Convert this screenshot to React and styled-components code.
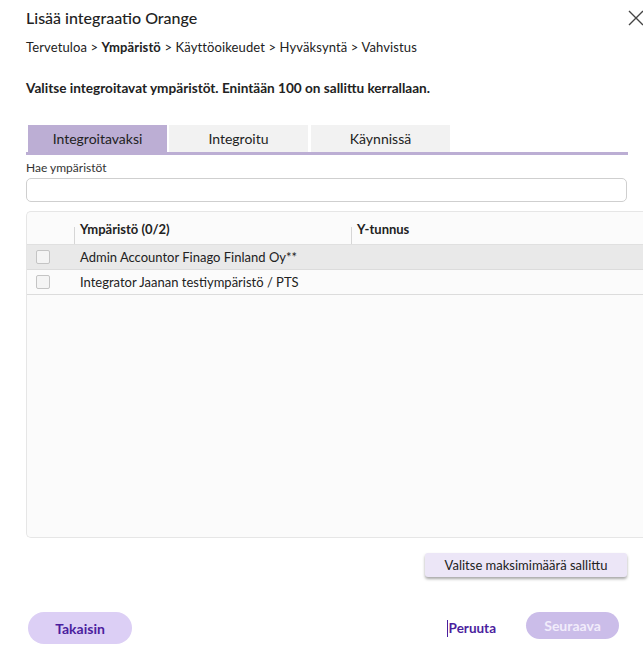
import React from 'react'
import styled, { createGlobalStyle } from 'styled-components'

const Global = createGlobalStyle`
    html, body {
        margin: 0;
        padding: 0;
        background: #fff;
        overflow: hidden;
    }
    body {
        font-family: Lato, "Noto Sans", sans-serif;
        color: #222;
    }
`

const Dialog = styled.div`
    width: 660px;
    height: 653px;
    padding: 0 0 0 26px;
    box-sizing: border-box;
    display: flex;
    flex-direction: column;
`

const Header = styled.div`
    display: flex;
    align-items: center;
    justify-content: space-between;
    height: 34px;
    width: 617px;
`

const Title = styled.h1`
    margin: 0;
    font-size: 16px;
    font-weight: 500;
    color: #222;
`

const Close = styled.button`
    border: none;
    background: none;
    padding: 0;
    width: 18px;
    height: 18px;
    margin-right: -2px;
    margin-top: 2px;
    cursor: pointer;
`

const Crumbs = styled.div`
    margin-top: 3px;
    font-size: 13px;
    letter-spacing: 0.12px;
    color: #222;
    height: 20px;
    line-height: 20px;
    b {
        font-weight: 700;
    }
`

const Intro = styled.p`
    margin: 21px 0 0;
    font-size: 13.6px;
    font-weight: 700;
    line-height: 20px;
`

const Tabs = styled.div`
    margin-top: 27px;
    width: 602px;
    display: flex;
    gap: 2px;
    border-bottom: 3px solid #bcaed4;
    padding-left: 2px;
    box-sizing: border-box;
`

const Tab = styled.div`
    width: 139px;
    height: 27px;
    display: flex;
    align-items: center;
    justify-content: center;
    font-size: 14px;
    color: #222;
    background: ${p => (p.$active ? '#bcaed4' : '#f2f2f2')};
    margin-left: ${p => p.$gap || 0}px;
`

const Label = styled.label`
    margin-top: 5px;
    font-size: 12px;
    color: #333;
    height: 16px;
    line-height: 16px;
`

const Input = styled.input`
    margin-top: 2px;
    width: 601px;
    height: 24px;
    box-sizing: border-box;
    border: 1px solid #cfcfcf;
    border-radius: 5px;
    background: #fff;
    outline: none;
`

const Table = styled.div`
    margin-top: 9px;
    width: 640px;
    height: 327px;
    box-sizing: border-box;
    border: 1px solid #e6e6e6;
    border-right: none;
    border-radius: 5px 0 0 5px;
    background: #fbfbfb;
`

const HeadRow = styled.div`
    display: grid;
    grid-template-columns: 47px 277px 1fr;
    height: 33px;
    box-sizing: border-box;
    border-bottom: 1px solid #e0e0e0;
`

const HeadCell = styled.div`
    position: relative;
    display: flex;
    align-items: center;
    padding-left: 6px;
    padding-top: 2px;
    font-size: 13px;
    font-weight: 700;
    color: #222;
    &::before {
        content: '';
        display: ${p => (p.$sep ? 'block' : 'none')};
        position: absolute;
        left: 0;
        top: 15px;
        bottom: 0;
        width: 1px;
        background: #d6d6d6;
    }
`

const Row = styled.div`
    display: grid;
    grid-template-columns: 47px 1fr;
    height: 25px;
    box-sizing: border-box;
    align-items: center;
    border-bottom: 1px solid #dcdcdc;
    background: ${p => (p.$hover ? '#e9e9e9' : '#fbfbfb')};
    font-size: 13px;
    color: #222;
`

const Check = styled.span`
    width: 14px;
    height: 14px;
    margin-left: 9px;
    box-sizing: border-box;
    border: 1px solid #c4c4c4;
    border-radius: 2px;
    background: #f4f4f4;
`

const Name = styled.span`
    padding-left: 6px;
`

const MaxRow = styled.div`
    width: 601px;
    display: flex;
    justify-content: flex-end;
    margin-top: 15px;
`

const MaxButton = styled.button`
    width: 202px;
    height: 24px;
    border: none;
    border-radius: 3px;
    background: #ece6f7;
    box-shadow: 0 2px 3px rgba(0, 0, 0, 0.35);
    font-family: inherit;
    font-size: 13px;
    color: #222;
    cursor: pointer;
`

const Footer = styled.div`
    margin-top: 35px;
    width: 593px;
    display: flex;
    align-items: flex-start;
    justify-content: space-between;
    padding-left: 2px;
    box-sizing: border-box;
`

const Pill = styled.button`
    height: ${p => p.$h || 32}px;
    width: ${p => p.$w}px;
    border: none;
    border-radius: 16px;
    font-family: inherit;
    font-size: 14px;
    font-weight: 700;
    background: ${p => p.$bg};
    color: ${p => p.$fg};
    cursor: pointer;
`

const Right = styled.div`
    display: flex;
    align-items: flex-start;
    gap: 30px;
`

const TextButton = styled.button`
    border: none;
    border-left: 1px solid #4b1e9e;
    background: none;
    padding: 0 0 0 1px;
    font-family: inherit;
    font-size: 13.5px;
    font-weight: 700;
    color: #4b1e9e;
    line-height: 17px;
    margin-top: 8px;
    cursor: pointer;
`

function CloseIcon() {
    return (
        <svg width="18" height="18" viewBox="0 0 18 18">
            <path d="M2 2 L16 16 M16 2 L2 16" stroke="#444" strokeWidth="1.4" fill="none" />
        </svg>
    )
}

export default function App() {
    return (
        <>
            <Global />
            <Dialog>
                <Header>
                    <Title>Lisää integraatio Orange</Title>
                    <Close aria-label="Sulje"><CloseIcon /></Close>
                </Header>
                <Crumbs>
                    Tervetuloa &gt; <b>Ympäristö</b> &gt; Käyttöoikeudet &gt; Hyväksyntä &gt; Vahvistus
                </Crumbs>
                <Intro>Valitse integroitavat ympäristöt. Enintään 100 on sallittu kerrallaan.</Intro>
                <Tabs>
                    <Tab $active>Integroitavaksi</Tab>
                    <Tab>Integroitu</Tab>
                    <Tab $gap={1}>Käynnissä</Tab>
                </Tabs>
                <Label>Hae ympäristöt</Label>
                <Input />
                <Table>
                    <HeadRow>
                        <HeadCell />
                        <HeadCell $sep>Ympäristö (0/2)</HeadCell>
                        <HeadCell $sep>Y-tunnus</HeadCell>
                    </HeadRow>
                    <Row $hover>
                        <Check />
                        <Name>Admin Accountor Finago Finland Oy**</Name>
                    </Row>
                    <Row>
                        <Check />
                        <Name>Integrator Jaanan testiympäristö / PTS</Name>
                    </Row>
                </Table>
                <MaxRow>
                    <MaxButton>Valitse maksimimäärä sallittu</MaxButton>
                </MaxRow>
                <Footer>
                    <Pill $w={104} $bg="#dccff5" $fg="#4b1e9e">Takaisin</Pill>
                    <Right>
                        <TextButton>Peruuta</TextButton>
                        <Pill $w={93} $h={27} $bg="#cbbde9" $fg="#f1ecfb">Seuraava</Pill>
                    </Right>
                </Footer>
            </Dialog>
        </>
    )
}
